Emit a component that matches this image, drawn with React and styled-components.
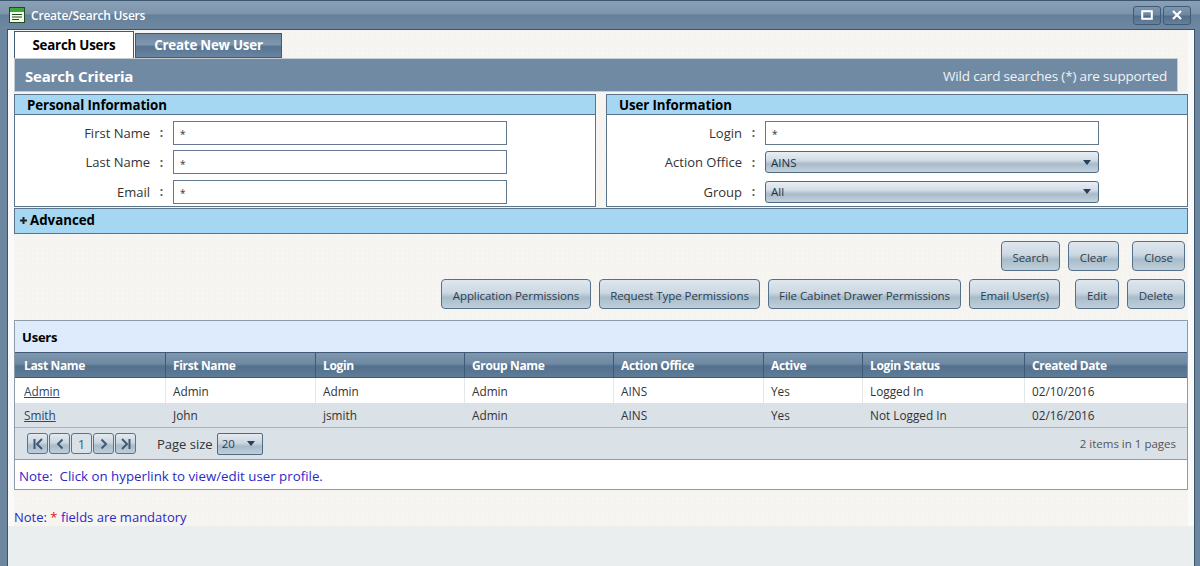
import React from 'react';
import styled, { createGlobalStyle } from 'styled-components';

const FONT = '"Open Sans", "Noto Sans", "Liberation Sans", sans-serif';

const GlobalStyle = createGlobalStyle`
  html, body { margin: 0; padding: 0; height: 100%; overflow: hidden; }
  body { font-family: ${FONT}; font-size: 12px; color: #222; background: #5f7a96; }
  * { box-sizing: border-box; }
`;

const Window = styled.div`
  width: 1200px;
  height: 566px;
  display: flex;
  flex-direction: column;
  overflow: hidden;
  background: #6d86a0;
  border-top: 1px solid #3d566f;
`;

const TitleBar = styled.div`
  height: 28px;
  flex: none;
  display: flex;
  align-items: center;
  padding: 0 9px 0 9px;
  background: linear-gradient(#8aa0b6 0%, #7e95ac 45%, #64809b 50%, #6f88a2 100%);
`;

const Title = styled.span`
  margin-left: 6px;
  color: #fff;
  font-size: 12px;
  font-weight: 600;
  letter-spacing: -0.2px;
`;

const WindowButtons = styled.div`
  margin-left: auto;
  display: flex;
  gap: 2px;
`;

const WindowButton = styled.div`
  width: 28px;
  height: 19px;
  display: flex;
  align-items: center;
  justify-content: center;
  border: 1px solid #3f5a76;
  border-radius: 3px;
  background: linear-gradient(#7e96ae 0%, #6d87a1 48%, #4f6d8b 52%, #668099 100%);
`;

const Frame = styled.div`
  flex: 1;
  margin: 0 5px 0 7px;
  padding: 1px 6px 0 6px;
  border: 1px solid #39536c;
  border-bottom: none;
  background-color: #f6f4f0;
  background-image: radial-gradient(#e8e5de 0.6px, transparent 0.7px), radial-gradient(#fdfcfa 0.6px, transparent 0.7px);
  background-size: 4px 4px, 5px 5px;
  background-position: 0 0, 2px 1px;
  display: flex;
  flex-direction: column;
  box-shadow: inset 6px 0 0 #fbfafa, inset -6px 0 0 #fbfafa;
`;

const Tabs = styled.div`
  display: flex;
  align-items: flex-end;
  height: 27px;
  flex: none;
`;

const Tab = styled.div`
  display: flex;
  align-items: center;
  justify-content: center;
  padding-bottom: ${p => (p.$active ? 0 : 2)}px;
  font-size: 13.3px;
  font-weight: 700;
  letter-spacing: -0.2px;
  width: ${p => p.$w}px;
  height: ${p => (p.$active ? 27 : 25)}px;
  color: ${p => (p.$active ? '#000' : '#fff')};
  background: ${p => (p.$active ? '#fff' : 'linear-gradient(#6d87a1 0%, #7f97ae 45%, #567491 55%, #6a84a0 100%)')};
  border: 1px solid #3f5a76;
  border-bottom: ${p => (p.$active ? 'none' : '1px solid #3f5a76')};
  margin-right: 1px;
`;

const CriteriaBar = styled.div`
  width: 1164px;
  height: 34px;
  flex: none;
  display: flex;
  align-items: center;
  justify-content: space-between;
  padding: 2px 10px 0 10px;
  background: #718aa3;
  border: 1px solid #c5ccd2;
  color: #fff;
`;

const CriteriaTitle = styled.span`
  font-size: 15px;
  font-weight: 700;
  letter-spacing: -0.2px;
`;

const CriteriaHint = styled.span`
  font-size: 13.5px;
  letter-spacing: -0.17px;
  color: #f0f3f6;
`;

const Panels = styled.div`
  display: grid;
  grid-template-columns: 582px 582px;
  column-gap: 10px;
  margin-top: 2px;
  flex: none;
`;

const Panel = styled.div`
  height: 113px;
  background: #fff;
  border: 1px solid #5b748c;
`;

const PanelHeader = styled.div`
  height: 20px;
  padding-left: 12px;
  display: flex;
  align-items: center;
  background: #a5d7f3;
  border-bottom: 1px solid #55708a;
  font-size: 13.3px;
  font-weight: 700;
  letter-spacing: -0.1px;
  color: #000;
`;

const FormGrid = styled.div`
  display: grid;
  grid-template-columns: 135px 23px 334px;
  grid-auto-rows: 29.5px;
  padding-top: 3px;
  align-items: center;
`;

const Label = styled.div`
  text-align: right;
  font-size: 13px;
  color: #333;
`;

const Colon = styled.div`
  text-align: center;
  font-size: 12px;
  font-weight: 700;
  color: #555;
`;

const TextInput = styled.input`
  width: 334px;
  height: 24px;
  padding: 3px 0 0 6px;
  border: 1px solid #64798d;
  background: #fff;
  font-family: ${FONT};
  font-size: 10px;
  color: #333;
  outline: none;
`;

const Dropdown = styled.div`
  width: 334px;
  height: 22px;
  padding: 0 7px 0 5px;
  display: flex;
  align-items: center;
  justify-content: space-between;
  border: 1px solid #4f6a84;
  border-radius: 3px;
  background: linear-gradient(#e9eef3 0%, #d3dde6 40%, #a9bac9 60%, #c5d2dd 100%);
  font-size: 11.5px;
  color: #22313f;
`;

const Arrow = styled.span`
  width: 0;
  height: 0;
  border-left: 4px solid transparent;
  border-right: 4px solid transparent;
  border-top: 5px solid #24405c;
`;

const AdvancedBar = styled.div`
  height: 26px;
  flex: none;
  margin-top: 1px;
  padding: 0 0 2px 4px;
  display: flex;
  align-items: center;
  gap: 2px;
  background: #a5d7f3;
  border: 1px solid #5b748c;
  font-size: 13.3px;
  font-weight: 700;
  color: #000;
`;

const ButtonRow = styled.div`
  display: flex;
  justify-content: flex-end;
  flex: none;
  height: 30px;
  margin-top: ${p => p.$top}px;
  padding-right: 3px;
`;

const Button = styled.div`
  width: ${p => p.$w}px;
  margin-left: ${p => p.$gap}px;
  height: 30px;
  display: flex;
  align-items: center;
  justify-content: center;
  padding-top: 3px;
  border: 1px solid #55708a;
  border-radius: 4px;
  background: linear-gradient(#dfe7ee 0%, #ccd8e2 45%, #a9bccb 62%, #c0cfdb 100%);
  font-size: 11.5px;
  letter-spacing: -0.06px;
  color: #2b3e50;
  white-space: nowrap;
`;

const UsersPanel = styled.div`
  margin-top: 11px;
  flex: none;
  border: 1px solid #8d9ba8;
  background: #fff;
`;

const UsersHeading = styled.div`
  height: 31px;
  padding-left: 7px;
  display: flex;
  align-items: center;
  background: #ddebfd;
  border-radius: 3px 3px 0 0;
  font-size: 13px;
  font-weight: 700;
  letter-spacing: -0.2px;
  color: #000;
`;

const COLUMNS = '151px 150px 149px 149px 150px 99px 162px 162px';

const HeaderRow = styled.div`
  display: grid;
  grid-template-columns: ${COLUMNS};
  height: 26px;
  background: linear-gradient(#7f97ae 0%, #6f89a3 45%, #53708d 55%, #5e7b97 100%);
  border-top: 1px solid #3f5a76;
  border-bottom: 1px solid #3f5a76;
`;

const HeaderCell = styled.div`
  display: flex;
  align-items: center;
  padding-left: 7px;
  border-right: 1px solid #3f5a76;
  color: #fff;
  font-size: 12px;
  font-weight: 700;
  letter-spacing: -0.35px;
  &:first-child { padding-left: 9px; }
  &:last-child { border-right: none; }
`;

const Row = styled.div`
  display: grid;
  grid-template-columns: ${COLUMNS};
  height: ${p => (p.$alt ? 24 : 25)}px;
  background: ${p => (p.$alt ? '#dae1e7' : '#fff')};
`;

const Cell = styled.div`
  display: flex;
  align-items: center;
  padding: 0 0 ${p => (p.$alt ? 1 : 0)}px 7px;
  border-right: 1px solid ${p => (p.$alt ? '#dae1e7' : '#e3e7ea')};
  font-size: 11.8px;
  color: #333;
  &:first-child { padding-left: 9px; }
  &:last-child { border-right: none; }
`;

const UserLink = styled.a`
  color: #2b4a68;
  text-decoration: underline;
`;

const Pager = styled.div`
  height: 33px;
  display: flex;
  align-items: center;
  padding: 0 11px 0 12px;
  background: #dae1e7;
  border-top: 1px solid #a8b4bf;
  border-bottom: 1px solid #8d9ba8;
`;

const PagerButtons = styled.div`
  display: flex;
  gap: 1px;
`;

const PagerButton = styled.div`
  width: 21px;
  height: 21px;
  display: flex;
  align-items: center;
  justify-content: center;
  border: 1px solid #5b748c;
  border-radius: 3px;
  background: ${p => (p.$plain ? '#dae1e7' : 'linear-gradient(#e4eaef 0%, #cbd6e0 45%, #a9bbca 62%, #c0cedb 100%)')};
  color: #2f6190;
  font-size: 13px;
`;

const PageSizeLabel = styled.span`
  margin-left: 21px;
  font-size: 13px;
  color: #333;
`;

const PageSizeSelect = styled.div`
  width: 46px;
  height: 22px;
  margin-left: 4px;
  padding: 0 7px 0 4px;
  display: flex;
  align-items: center;
  justify-content: space-between;
  border: 1px solid #4f6a84;
  border-radius: 2px;
  background: linear-gradient(#e4eaef 0%, #cbd6e0 45%, #a9bbca 62%, #c0cedb 100%);
  font-size: 11.5px;
  color: #2b3e50;
`;

const PagerInfo = styled.span`
  margin-left: auto;
  font-size: 11.5px;
  color: #555;
`;

const GridNote = styled.div`
  height: 29px;
  padding: 2px 0 0 4px;
  display: flex;
  align-items: center;
  font-size: 13.3px;
  color: #2a2ac8;
  white-space: pre;
`;

const MandatoryNote = styled.div`
  margin-top: 18px;
  height: 18px;
  flex: none;
  font-size: 13px;
  line-height: 18px;
  color: #2a2ac8;
`;

const Required = styled.span`
  color: #e01010;
`;

const BottomArea = styled.div`
  flex: 1;
  margin: 0 -6px 0 -6px;
  background: #ebeeee;
`;

const WindowIcon = () => (
  <svg width="16" height="16" viewBox="0 0 16 16">
    <rect x="0.5" y="0.5" width="15" height="15" fill="#f4fbe9" stroke="#1d4d24" />
    <rect x="1" y="1" width="14" height="4" fill="#3fa53c" />
    <path d="M3 7.5h10M3 10h10M3 12.5h7" stroke="#1d4d24" strokeWidth="1.2" />
  </svg>
);

const MaximizeIcon = () => (
  <svg width="12" height="10" viewBox="0 0 12 10">
    <rect x="1.2" y="1.2" width="9.6" height="7.6" fill="none" stroke="#fff" strokeWidth="2" />
  </svg>
);

const CloseIcon = () => (
  <svg width="10" height="10" viewBox="0 0 10 10">
    <path d="M1 1l8 8M9 1l-8 8" stroke="#fff" strokeWidth="2.2" />
  </svg>
);

const PagerIcon = ({ d }) => (
  <svg width="12" height="12" viewBox="0 0 12 12">
    <path d={d} fill="none" stroke="#3e5a75" strokeWidth="2" />
  </svg>
);

const personal = [['First Name'], ['Last Name'], ['Email']];
const columns = ['Last Name', 'First Name', 'Login', 'Group Name', 'Action Office', 'Active', 'Login Status', 'Created Date'];
const rows = [
  ['Admin', 'Admin', 'Admin', 'Admin', 'AINS', 'Yes', 'Logged In', '02/10/2016'],
  ['Smith', 'John', 'jsmith', 'Admin', 'AINS', 'Yes', 'Not Logged In', '02/16/2016'],
];

const FormLabel = ({ children }) => (
  <>
    <Label>{children}</Label>
    <Colon>:</Colon>
  </>
);

export default function App() {
  return (
    <>
      <GlobalStyle />
      <Window>
        <TitleBar>
          <WindowIcon />
          <Title>Create/Search Users</Title>
          <WindowButtons>
            <WindowButton><MaximizeIcon /></WindowButton>
            <WindowButton><CloseIcon /></WindowButton>
          </WindowButtons>
        </TitleBar>
        <Frame>
          <Tabs>
            <Tab $active $w={120}>Search Users</Tab>
            <Tab $w={147}>Create New User</Tab>
          </Tabs>
          <CriteriaBar>
            <CriteriaTitle>Search Criteria</CriteriaTitle>
            <CriteriaHint>Wild card searches (*) are supported</CriteriaHint>
          </CriteriaBar>
          <Panels>
            <Panel>
              <PanelHeader>Personal Information</PanelHeader>
              <FormGrid>
                {personal.map(([name]) => (
                  <React.Fragment key={name}>
                    <FormLabel>{name}</FormLabel>
                    <TextInput readOnly value="*" />
                  </React.Fragment>
                ))}
              </FormGrid>
            </Panel>
            <Panel>
              <PanelHeader>User Information</PanelHeader>
              <FormGrid>
                <FormLabel>Login</FormLabel>
                <TextInput readOnly value="*" />
                <FormLabel>Action Office</FormLabel>
                <Dropdown>AINS<Arrow /></Dropdown>
                <FormLabel>Group</FormLabel>
                <Dropdown>All<Arrow /></Dropdown>
              </FormGrid>
            </Panel>
          </Panels>
          <AdvancedBar>
            <svg width="9" height="9" viewBox="0 0 9 9">
              <path d="M4.5 1v7M1 4.5h7" stroke="#222" strokeWidth="2" />
            </svg>
            Advanced
          </AdvancedBar>
          <ButtonRow $top={7}>
            <Button $w={59}>Search</Button>
            <Button $w={51} $gap={8}>Clear</Button>
            <Button $w={53} $gap={13}>Close</Button>
          </ButtonRow>
          <ButtonRow $top={8}>
            <Button $w={150}>Application Permissions</Button>
            <Button $w={161} $gap={8}>Request Type Permissions</Button>
            <Button $w={193} $gap={8}>File Cabinet Drawer Permissions</Button>
            <Button $w={91} $gap={8}>Email User(s)</Button>
            <Button $w={44} $gap={15}>Edit</Button>
            <Button $w={58} $gap={8}>Delete</Button>
          </ButtonRow>
          <UsersPanel>
            <UsersHeading>Users</UsersHeading>
            <HeaderRow>
              {columns.map(c => <HeaderCell key={c}>{c}</HeaderCell>)}
            </HeaderRow>
            {rows.map((r, i) => (
              <Row key={r[2]} $alt={i === 1}>
                {r.map((v, j) => (
                  <Cell key={j} $alt={i === 1}>
                    {j === 0 ? <UserLink href="#">{v}</UserLink> : v}
                  </Cell>
                ))}
              </Row>
            ))}
            <Pager>
              <PagerButtons>
                <PagerButton><PagerIcon d="M2.5 1v10M10 1L5 6l5 5" /></PagerButton>
                <PagerButton><PagerIcon d="M8.5 1.5L4 6l4.5 4.5" /></PagerButton>
                <PagerButton $plain>1</PagerButton>
                <PagerButton><PagerIcon d="M3.5 1.5L8 6l-4.5 4.5" /></PagerButton>
                <PagerButton><PagerIcon d="M9.5 1v10M2 1l5 5-5 5" /></PagerButton>
              </PagerButtons>
              <PageSizeLabel>Page size</PageSizeLabel>
              <PageSizeSelect>20<Arrow /></PageSizeSelect>
              <PagerInfo>2 items in 1 pages</PagerInfo>
            </Pager>
            <GridNote>Note:  Click on hyperlink to view/edit user profile.</GridNote>
          </UsersPanel>
          <MandatoryNote>Note: <Required>*</Required> fields are mandatory</MandatoryNote>
          <BottomArea />
        </Frame>
      </Window>
    </>
  );
}
